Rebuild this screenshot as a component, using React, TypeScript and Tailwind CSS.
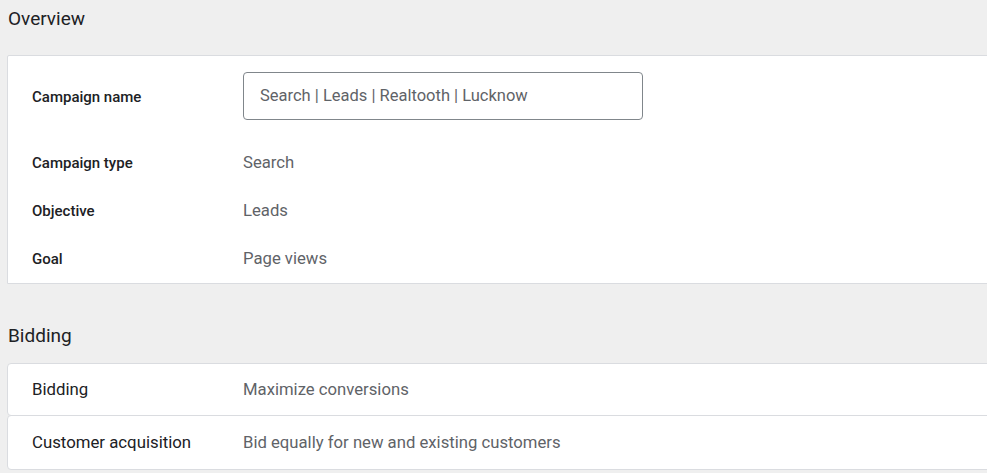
const overviewRows = [
  { label: "Campaign type", value: "Search" },
  { label: "Objective", value: "Leads" },
  { label: "Goal", value: "Page views" },
];

const biddingRows = [
  { label: "Bidding", value: "Maximize conversions", h: "h-[53px]" },
  { label: "Customer acquisition", value: "Bid equally for new and existing customers", h: "h-[55px] -mt-px" },
];

export default function App() {
  return (
    <div className="h-[473px] w-[987px] overflow-hidden bg-[#efefef] font-['Roboto',sans-serif]">
      <div className="pl-[7px]">
        <h2 className="pl-px pt-[7px] text-[19px] leading-6 font-normal text-[#202124]">Overview</h2>

        {/* overview card */}
        <section className="mt-6 -mr-4 rounded-tl-[2px] border border-[#dadce0] bg-white">
          <div className="flex items-center pt-4 pb-[19px] pl-6">
            <div className="mt-[3px] w-[211px] text-[15px] font-medium text-[#202124]">Campaign name</div>
            <div className="flex h-12 w-[400px] items-center rounded border border-[#80868b] px-4 text-[16.5px] text-[#5f6368]">
              Search | Leads | Realtooth | Lucknow
            </div>
          </div>
          {overviewRows.map((row) => (
            <div key={row.label} className="flex h-12 items-center pl-6">
              <div className="w-[211px] text-[15px] font-medium text-[#202124]">{row.label}</div>
              <div className="text-[16.7px] text-[#5f6368]">{row.value}</div>
            </div>
          ))}
        </section>

        <h2 className="pl-px pt-10 text-[19px] leading-6 font-normal text-[#202124]">Bidding</h2>

        {/* bidding cards */}
        <div className="mt-[15px] -mr-4">
          {biddingRows.map((row) => (
            <div
              key={row.label}
              className={"flex items-center rounded border border-[#dadce0] bg-white pl-6 " + row.h}
            >
              <div className="w-[211px] text-[16.8px] text-[#202124]">{row.label}</div>
              <div className="text-[16.7px] text-[#5f6368]">{row.value}</div>
            </div>
          ))}
        </div>
      </div>
    </div>
  );
}
